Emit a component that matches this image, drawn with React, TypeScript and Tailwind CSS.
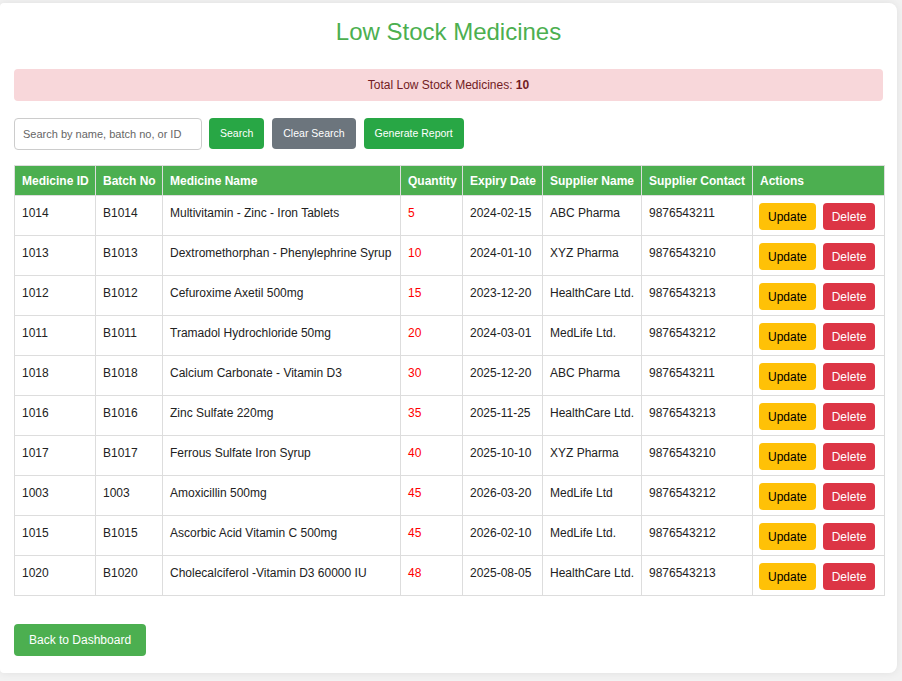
import React from 'react';

interface Medicine {
  id: string;
  batch: string;
  name: string;
  qty: number;
  expiry: string;
  supplier: string;
  contact: string;
}

const medicines: Medicine[] = [
  { id: '1014', batch: 'B1014', name: 'Multivitamin - Zinc - Iron Tablets', qty: 5, expiry: '2024-02-15', supplier: 'ABC Pharma', contact: '9876543211' },
  { id: '1013', batch: 'B1013', name: 'Dextromethorphan - Phenylephrine Syrup', qty: 10, expiry: '2024-01-10', supplier: 'XYZ Pharma', contact: '9876543210' },
  { id: '1012', batch: 'B1012', name: 'Cefuroxime Axetil 500mg', qty: 15, expiry: '2023-12-20', supplier: 'HealthCare Ltd.', contact: '9876543213' },
  { id: '1011', batch: 'B1011', name: 'Tramadol Hydrochloride 50mg', qty: 20, expiry: '2024-03-01', supplier: 'MedLife Ltd.', contact: '9876543212' },
  { id: '1018', batch: 'B1018', name: 'Calcium Carbonate - Vitamin D3', qty: 30, expiry: '2025-12-20', supplier: 'ABC Pharma', contact: '9876543211' },
  { id: '1016', batch: 'B1016', name: 'Zinc Sulfate 220mg', qty: 35, expiry: '2025-11-25', supplier: 'HealthCare Ltd.', contact: '9876543213' },
  { id: '1017', batch: 'B1017', name: 'Ferrous Sulfate Iron Syrup', qty: 40, expiry: '2025-10-10', supplier: 'XYZ Pharma', contact: '9876543210' },
  { id: '1003', batch: '1003', name: 'Amoxicillin 500mg', qty: 45, expiry: '2026-03-20', supplier: 'MedLife Ltd', contact: '9876543212' },
  { id: '1015', batch: 'B1015', name: 'Ascorbic Acid Vitamin C 500mg', qty: 45, expiry: '2026-02-10', supplier: 'MedLife Ltd.', contact: '9876543212' },
  { id: '1020', batch: 'B1020', name: 'Cholecalciferol -Vitamin D3 60000 IU', qty: 48, expiry: '2025-08-05', supplier: 'HealthCare Ltd.', contact: '9876543213' },
];

const headers: { label: string; w: string }[] = [
  { label: 'Medicine ID', w: 'w-[81px]' },
  { label: 'Batch No', w: 'w-[67px]' },
  { label: 'Medicine Name', w: 'w-[238px]' },
  { label: 'Quantity', w: 'w-[62px]' },
  { label: 'Expiry Date', w: 'w-[80px]' },
  { label: 'Supplier Name', w: 'w-[99px]' },
  { label: 'Supplier Contact', w: 'w-[111px]' },
  { label: 'Actions', w: 'w-[132px]' },
];

export default function App() {
  const [query, setQuery] = React.useState('');

  const cell = 'border border-[#ddd] px-[7px] pt-[8px] pb-[8px] align-top';

  return (
    <div className="min-h-screen bg-[#f2f2f2] pt-[3px] font-['Liberation_Sans',Arial,sans-serif]">
      <div className="w-[897px] bg-white rounded-r-[8px] rounded-l-[4px] shadow-[0_0_8px_rgba(0,0,0,0.08)] px-[14px] pt-[15px] pb-[17px]">
        <h2 className="text-center text-[24px] leading-[28px] text-[#4caf50]">Low Stock Medicines</h2>

        <div className="mt-[23px] h-[32px] flex items-center justify-center rounded-[4px] bg-[#f8d7da] text-[#721c24] text-[12px]">
          <span>
            Total Low Stock Medicines: <strong>10</strong>
          </span>
        </div>

        <div className="mt-[17px] flex items-start">
          <input
            value={query}
            onChange={(e) => setQuery(e.target.value)}
            placeholder="Search by name, batch no, or ID"
            className="w-[188px] h-[32px] border border-[#ccc] rounded-[4px] px-[8px] text-[11px] placeholder-[#666] outline-none"
          />
          <button className="ml-[7px] h-[31px] px-[11px] rounded-[4px] bg-[#28a745] text-white text-[10.5px]">Search</button>
          <button className="ml-[8px] h-[31px] px-[11px] rounded-[4px] bg-[#6c757d] text-white text-[10.5px]">Clear Search</button>
          <button className="ml-[8px] h-[31px] px-[11px] rounded-[4px] bg-[#28a745] text-white text-[10.5px]">Generate Report</button>
        </div>

        <table className="mt-[15px] w-[870px] table-fixed border-collapse text-[12px] text-[#222]">
          <thead>
            <tr className="bg-[#4caf50] text-white">
              {headers.map((h) => (
                <th key={h.label} className={`${h.w} border border-[#ddd] h-[30px] px-[7px] text-left font-bold whitespace-nowrap`}>
                  {h.label}
                </th>
              ))}
            </tr>
          </thead>
          <tbody>
            {medicines.map((m) => (
              <tr key={m.id + m.batch} className="h-[40px]">
                <td className={cell}>{m.id}</td>
                <td className={cell}>{m.batch}</td>
                <td className={cell}>{m.name}</td>
                <td className={`${cell} text-[#ff0000]`}>{m.qty}</td>
                <td className={cell}>{m.expiry}</td>
                <td className={`${cell} whitespace-nowrap`}>{m.supplier}</td>
                <td className={cell}>{m.contact}</td>
                <td className="border border-[#ddd] px-[6px] pt-[7px] pb-[5px] align-top">
                  <div className="flex gap-[7px]">
                    <button className="h-[27px] px-[9px] rounded-[4px] bg-[#ffc107] text-black text-[12px]">Update</button>
                    <button className="h-[27px] px-[9px] rounded-[4px] bg-[#dc3545] text-white text-[12px]">Delete</button>
                  </div>
                </td>
              </tr>
            ))}
          </tbody>
        </table>

        <button className="mt-[28px] h-[32px] px-[15px] rounded-[4px] bg-[#4caf50] text-white text-[12px]">Back to Dashboard</button>
      </div>
    </div>
  );
}
